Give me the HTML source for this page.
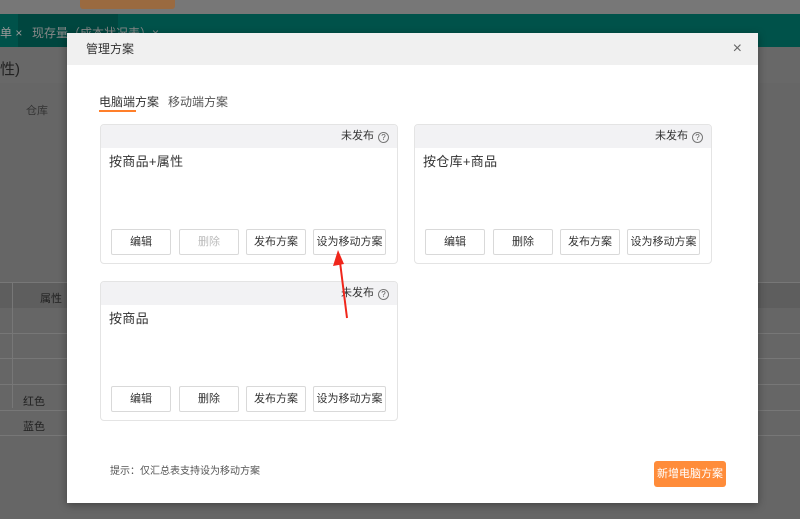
<!DOCTYPE html>
<html><head><meta charset="utf-8"><style>
*{margin:0;padding:0;box-sizing:border-box}
body{width:800px;height:519px;overflow:hidden;position:relative;background:#666;font-family:"Liberation Sans","Noto Sans CJK SC",sans-serif;font-size:12px;color:#333}
.abs{position:absolute}
.modal{left:67px;top:33px;width:691px;height:470px;background:#fff;box-shadow:0 2px 8px rgba(0,0,0,.35)}
.mh{left:0;top:0;width:691px;height:32px;background:#f0f0f0;line-height:32px;padding-left:19px;font-size:12px;color:#333}
.card{width:298px;height:140px;border:1px solid #e4e4e4;border-radius:4px;background:#fff;overflow:hidden}
.ch{height:23px;background:#f2f2f4;text-align:right;padding-right:8px;line-height:23px;font-size:11px;color:#333}
.q{display:inline-block;width:11px;height:11px;border:1px solid #777;border-radius:50%;font-size:8px;line-height:9px;text-align:center;vertical-align:-1px;margin-left:4px;color:#555}
.title{position:absolute;left:8px;top:26px;font-size:13px;color:#333;letter-spacing:.3px}
.btn{position:absolute;top:104px;height:26px;border:1px solid #d9d9d9;border-radius:2px;background:#fff;font-size:11px;line-height:24px;text-align:center;color:#333}
</style></head><body>
<div class="abs" style="left:0;top:0;width:800px;height:14px;background:#777"></div>
<div class="abs" style="left:80px;top:0;width:95px;height:9px;background:#9a6a40;border-radius:0 0 3px 3px"></div>
<div class="abs" style="left:0;top:14px;width:800px;height:33px;background:#00524a"></div>
<div class="abs" style="left:18px;top:14px;width:100px;height:33px;background:#00463f"></div>
<div class="abs" style="left:0;top:24px;color:#999;font-size:12px">单 ×</div>
<div class="abs" style="left:32px;top:24px;color:#888;font-size:12px">现存量（成本状况表）×</div>
<div class="abs" style="left:0;top:47px;width:800px;height:36px;background:#686868"></div>
<div class="abs" style="left:0;top:58px;color:#222;font-size:15px">性)</div>
<div class="abs" style="left:26px;top:102px;color:#333;font-size:11px">仓库</div>
<div class="abs" style="left:0;top:282px;width:800px;height:1px;background:#777"></div>
<div class="abs" style="left:0;top:283px;width:800px;height:25px;background:#5e5e5e"></div>
<div class="abs" style="left:12px;top:283px;width:1px;height:125px;background:#777"></div>
<div class="abs" style="left:40px;top:290px;color:#222;font-size:11px">属性</div>
<div class="abs" style="left:0;top:333px;width:800px;height:1px;background:#777"></div>
<div class="abs" style="left:0;top:358px;width:800px;height:1px;background:#777"></div>
<div class="abs" style="left:0;top:384px;width:800px;height:1px;background:#777"></div>
<div class="abs" style="left:0;top:410px;width:800px;height:1px;background:#777"></div>
<div class="abs" style="left:0;top:435px;width:800px;height:1px;background:#777"></div>
<div class="abs" style="left:23px;top:393px;color:#222;font-size:11px">红色</div>
<div class="abs" style="left:23px;top:418px;color:#222;font-size:11px">蓝色</div>

<div class="abs modal">
 <div class="abs mh">管理方案</div>
 <div class="abs" style="right:16px;top:7px;font-size:16px;color:#666">×</div>
 <div class="abs" style="left:32px;top:60px;font-size:12px;color:#333">电脑端方案</div>
 <div class="abs" style="left:32px;top:77px;width:37px;height:2px;background:#ff7f2a"></div>
 <div class="abs" style="left:101px;top:60px;font-size:12px;color:#555">移动端方案</div>

 <div class="abs card" style="left:33px;top:91px">
  <div class="ch">未发布<span class="q">?</span></div>
  <div class="title">按商品+属性</div>
  <div class="btn" style="left:10px;width:60px">编辑</div>
  <div class="btn" style="left:78px;width:60px;color:#bbb">删除</div>
  <div class="btn" style="left:145px;width:60px">发布方案</div>
  <div class="btn" style="left:212px;width:73px">设为移动方案</div>
 </div>
 <div class="abs card" style="left:347px;top:91px">
  <div class="ch">未发布<span class="q">?</span></div>
  <div class="title">按仓库+商品</div>
  <div class="btn" style="left:10px;width:60px">编辑</div>
  <div class="btn" style="left:78px;width:60px">删除</div>
  <div class="btn" style="left:145px;width:60px">发布方案</div>
  <div class="btn" style="left:212px;width:73px">设为移动方案</div>
 </div>
 <div class="abs card" style="left:33px;top:248px">
  <div class="ch">未发布<span class="q">?</span></div>
  <div class="title">按商品</div>
  <div class="btn" style="left:10px;width:60px">编辑</div>
  <div class="btn" style="left:78px;width:60px">删除</div>
  <div class="btn" style="left:145px;width:60px">发布方案</div>
  <div class="btn" style="left:212px;width:73px">设为移动方案</div>
 </div>
 <div class="abs" style="left:43px;top:429px;font-size:10px;color:#555">提示：仅汇总表支持设为移动方案</div>
 <div class="abs" style="left:587px;top:428px;width:72px;height:26px;background:#ff8c3a;border-radius:3px;color:#fff;font-size:11px;line-height:26px;text-align:center">新增电脑方案</div>
</div>
<svg class="abs" style="left:0;top:0" width="800" height="519"><path d="M347 318 L340 262" stroke="#f0261b" stroke-width="2"/><path d="M338 250 L333 266 L344 264 Z" fill="#f0261b"/></svg>
</body></html>
